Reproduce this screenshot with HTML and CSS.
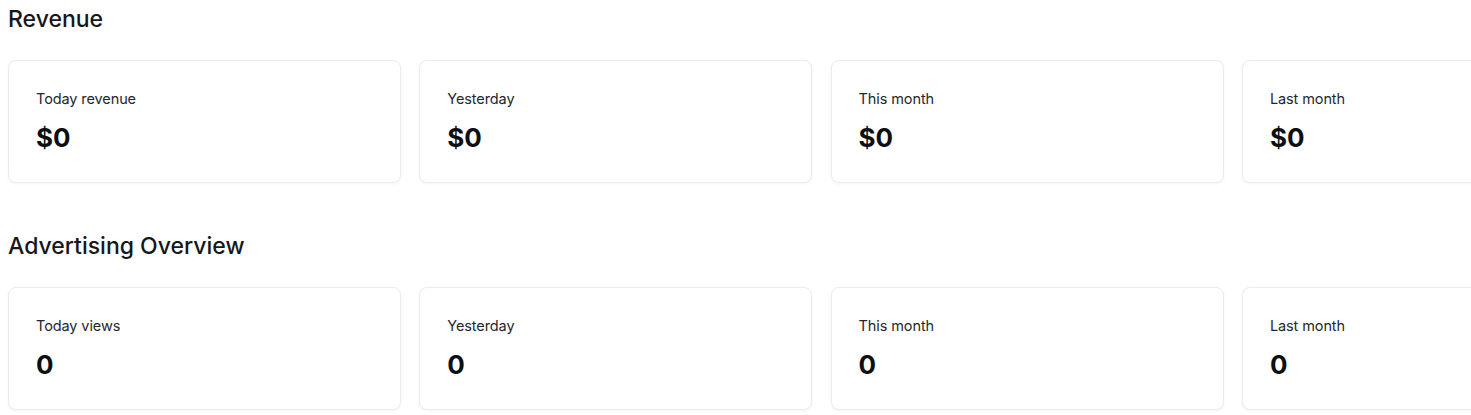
FILE: index.html
```html
<!DOCTYPE html>
<html lang="en">
<head>
<meta charset="utf-8">
<title>Dashboard</title>
<link rel="stylesheet" href="styles.css">
</head>
<body>
<section class="section">
  <h2 class="section-title">Revenue</h2>
  <div class="cards">
    <div class="card"><div class="card-label">Today revenue</div><div class="card-value">$0</div></div>
    <div class="card"><div class="card-label">Yesterday</div><div class="card-value">$0</div></div>
    <div class="card"><div class="card-label">This month</div><div class="card-value">$0</div></div>
    <div class="card"><div class="card-label">Last month</div><div class="card-value">$0</div></div>
  </div>
</section>
<section class="section">
  <h2 class="section-title">Advertising Overview</h2>
  <div class="cards">
    <div class="card"><div class="card-label">Today views</div><div class="card-value">0</div></div>
    <div class="card"><div class="card-label">Yesterday</div><div class="card-value">0</div></div>
    <div class="card"><div class="card-label">This month</div><div class="card-value">0</div></div>
    <div class="card"><div class="card-label">Last month</div><div class="card-value">0</div></div>
  </div>
</section>
</body>
</html>
```
FILE: styles.css
```css
html, body {
  margin: 0;
  padding: 0;
  background: #ffffff;
  overflow: hidden;
}
body {
  padding: 8px;
  font-family: Inter, "Noto Sans", sans-serif;
  color: #111418;
  display: flex;
  flex-direction: column;
  gap: 52px;
}
.section {
  display: flex;
  flex-direction: column;
  gap: 30px;
}
.section-title {
  margin: 0;
  font-size: 23px;
  line-height: 22px;
  font-weight: 500;
  color: #15171a;
}
.cards {
  display: grid;
  grid-template-columns: repeat(4, 393px);
  gap: 18.3px;
}
.card {
  box-sizing: border-box;
  height: 123px;
  background: #fff;
  border: 1px solid #ececee;
  border-radius: 8px;
  box-shadow: 0 1px 3px rgba(0, 0, 0, 0.05);
  padding: 28px 27px;
  display: flex;
  flex-direction: column;
  gap: 13px;
}
.card-label {
  font-size: 14.5px;
  line-height: 20px;
  color: #24272b;
  letter-spacing: -0.1px;
}
.card-value {
  font-size: 26px;
  line-height: 32px;
  font-weight: 700;
  color: #0d0f12;
}
```
